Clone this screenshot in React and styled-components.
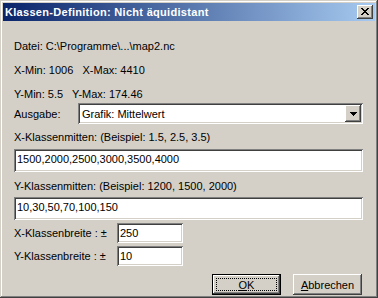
import React from "react";
import styled, { createGlobalStyle } from "styled-components";

const Global = createGlobalStyle`
  html, body { margin: 0; padding: 0; background: #d4d0c8; }
  * { box-sizing: border-box; }
`;

const FACE = "#d4d0c8";
const raised = `inset -1px -1px #404040, inset 1px 1px #ffffff, inset -2px -2px #808080, inset 2px 2px ${FACE}`;
const sunken = `inset 1px 1px #808080, inset -1px -1px #ffffff, inset 2px 2px #404040, inset -2px -2px ${FACE}`;

const Window = styled.div`
  width: 378px;
  height: 298px;
  padding: 3px;
  background: ${FACE};
  box-shadow: inset -1px -1px #404040, inset 1px 1px ${FACE}, inset -2px -2px #808080, inset 2px 2px #ffffff;
  display: flex;
  flex-direction: column;
  font-family: "Liberation Sans", Arial, sans-serif;
  font-size: 11px;
  color: #000;
`;

const TitleBar = styled.div`
  height: 18px;
  flex: none;
  display: flex;
  align-items: center;
  justify-content: space-between;
  padding: 0 2px 0 2px;
  background: linear-gradient(to right, #0a246a, #a6caf0);
`;

const Title = styled.span`
  color: #fff;
  font-weight: bold;
  font-size: 11px;
  letter-spacing: 0.3px;
  line-height: 18px;
  white-space: nowrap;
`;

const CloseButton = styled.div`
  width: 16px;
  height: 14px;
  background: ${FACE};
  box-shadow: ${raised};
  display: flex;
  align-items: center;
  justify-content: center;
  padding: 0 1px 1px 0;
`;

const Content = styled.div`
  flex: 1;
  display: flex;
  flex-direction: column;
  padding: 18px 12px 0 11px;
`;

const Line = styled.div`
  height: 14px;
  line-height: 14px;
  margin-top: ${(p) => p.$mt || 0}px;
  white-space: pre;
`;

const Row = styled.div`
  display: flex;
  align-items: center;
  margin-top: ${(p) => p.$mt || 0}px;
  height: ${(p) => p.$h || 20}px;
`;

const Label = styled.span`
  width: ${(p) => p.$w}px;
  flex: none;
  white-space: pre;
`;

const Field = styled.div`
  width: ${(p) => (p.$w ? `${p.$w}px` : "auto")};
  flex: ${(p) => (p.$w ? "none" : "1")};
  height: 20px;
  background: #fff;
  box-shadow: ${sunken};
  padding: 0 3px;
  line-height: 20px;
  white-space: nowrap;
  margin-top: ${(p) => p.$mt || 0}px;
`;

const Combo = styled.div`
  flex: 1;
  height: 21px;
  background: #fff;
  box-shadow: ${sunken};
  display: flex;
  align-items: center;
  padding: 2px;
`;

const ComboText = styled.span`
  flex: 1;
  padding-left: 2px;
`;

const DropButton = styled.div`
  width: 16px;
  height: 17px;
  background: ${FACE};
  box-shadow: ${raised};
  display: flex;
  align-items: center;
  justify-content: center;
`;

const Buttons = styled.div`
  display: flex;
  justify-content: flex-end;
  gap: 12px;
  margin-top: 8px;
  padding-right: 1px;
`;

const Button = styled.div`
  width: ${(p) => p.$w}px;
  height: 21px;
  background: ${FACE};
  box-shadow: ${(p) =>
    p.$default
      ? `inset 0 0 0 1px #000, inset -2px -2px #404040, inset 2px 2px #ffffff, inset -3px -3px #808080, inset 3px 3px ${FACE}`
      : raised};
  display: flex;
  align-items: center;
  justify-content: center;
  padding: 4px;
`;

const Focus = styled.div`
  width: 100%;
  height: 100%;
  outline: 1px dotted #000;
  outline-offset: -1px;
  display: flex;
  align-items: center;
  justify-content: center;
`;

const U = styled.span`
  text-decoration: underline;
`;

export default function App() {
  return (
    <>
      <Global />
      <Window>
        <TitleBar>
          <Title>Klassen-Definition: Nicht äquidistant</Title>
          <CloseButton>
            <svg width="8" height="7" viewBox="0 0 8 7" shapeRendering="crispEdges">
              <path
                fill="#000"
                d="M0 0h2v1H0zM6 0h2v1H6zM1 1h2v1H1zM5 1h2v1H5zM2 2h4v1H2zM3 3h2v1H3zM2 4h4v1H2zM1 5h2v1H1zM5 5h2v1H5zM0 6h2v1H0zM6 6h2v1H6z"
              />
            </svg>
          </CloseButton>
        </TitleBar>
        <Content>
          <Line>Datei: C:\Programme\...\map2.nc</Line>
          <Line $mt={10}>X-Min: 1006   X-Max: 4410</Line>
          <Line $mt={10}>Y-Min: 5.5   Y-Max: 174.46</Line>
          <Row $mt={2} $h={21}>
            <Label $w={64}>Ausgabe:</Label>
            <Combo>
              <ComboText>Grafik: Mittelwert</ComboText>
              <DropButton>
                <svg width="7" height="4" viewBox="0 0 7 4" shapeRendering="crispEdges">
                  <path fill="#000" d="M0 0h7v1H0zM1 1h5v1H1zM2 2h3v1H2zM3 3h1v1H3z" />
                </svg>
              </DropButton>
            </Combo>
          </Row>
          <Line $mt={6}>X-Klassenmitten: (Beispiel: 1.5, 2.5, 3.5)</Line>
          <Field $mt={5}>1500,2000,2500,3000,3500,4000</Field>
          <Line $mt={7}>Y-Klassenmitten: (Beispiel: 1200, 1500, 2000)</Line>
          <Field $mt={4}>10,30,50,70,100,150</Field>
          <Row $mt={3}>
            <Label $w={103}>X-Klassenbreite : ±</Label>
            <Field $w={66}>250</Field>
          </Row>
          <Row $mt={3}>
            <Label $w={103}>Y-Klassenbreite : ±</Label>
            <Field $w={66}>10</Field>
          </Row>
          <Buttons>
            <Button $w={69} $default>
              <Focus>
                <span>
                  <U>O</U>K
                </span>
              </Focus>
            </Button>
            <Button $w={69}>
              <span>
                <U>A</U>bbrechen
              </span>
            </Button>
          </Buttons>
        </Content>
      </Window>
    </>
  );
}
